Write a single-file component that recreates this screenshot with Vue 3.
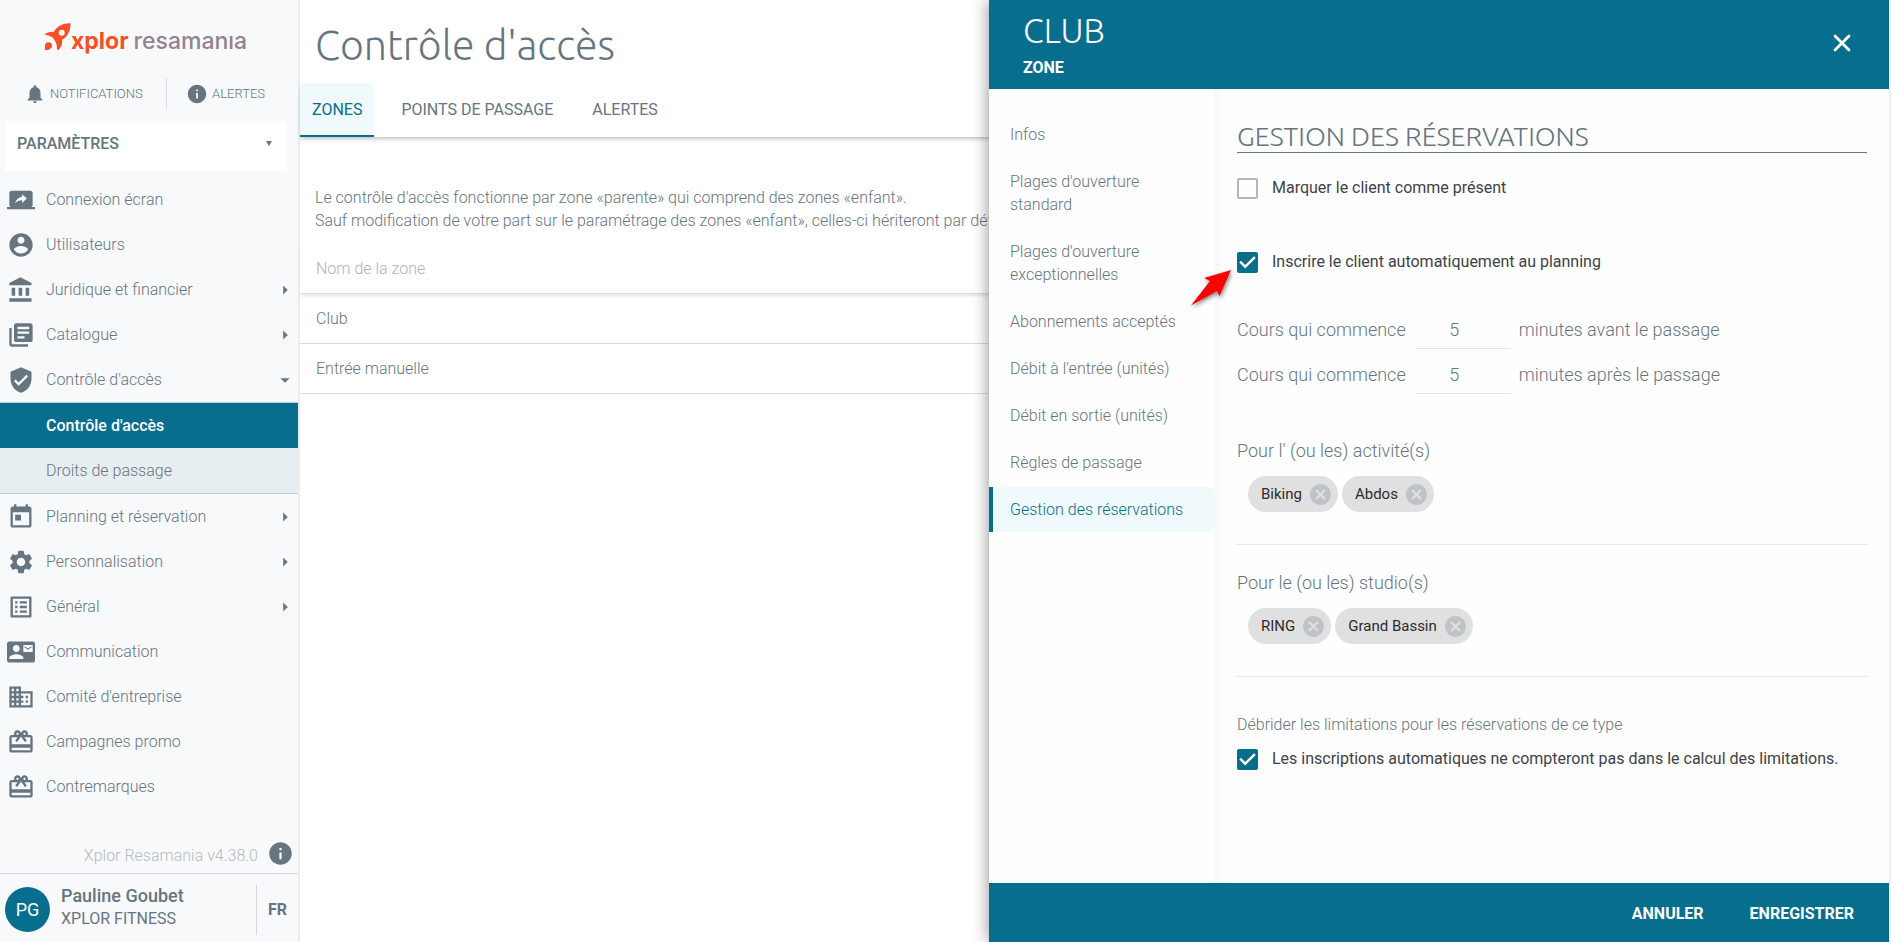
<template>
	<div class="page">
		<aside class="sidebar">
			<a href="#" class="logo">
				<svg class="rocket" viewBox="0 0 26 28">
					<path fill-rule="evenodd" d="M25.6.3C17.600.2 11.700 3.500 9 8.700 5.400 8.500 2.400 9.400.3 11c-.5.4-.3 1 .3 1.100 4 .2 7.200 1.900 9.200 5.400 1.600 2.600 2.200 5.300 2.200 8.500.1 1.200 1.100 1.300 1.800.5 2.500-2.700 3.700-6 3.300-9.700C22.700 13.600 25.500 8.200 25.600.3zM16.700 6.700a3 3 0 1 1 0 6 3 3 0 0 1 0-6z" />
					<path d="M0 27.200v-5c0-3.200 5-4.200 6.700-1.200 1.300 3.400-1.700 6.200-6.700 6.200z" />
				</svg>
				<span class="logo-xplor">xplor</span>
				<span class="logo-name">resamanıa</span>
			</a>

			<div class="notices">
				<button type="button" class="notice">
					<svg viewBox="0 0 24 24"><path :d="icons.bell" /></svg>NOTIFICATIONS
				</button>
				<button type="button" class="notice">
					<svg viewBox="0 0 24 24"><path :d="icons.info" /></svg>ALERTES
				</button>
			</div>

			<div class="section-select">
				<select v-model="section" aria-label="Section">
					<option>PARAMÈTRES</option>
				</select>
			</div>

			<nav class="menu">
				<template v-for="item in menu" :key="item.label">
					<a href="#" class="menu-item">
						<svg class="menu-icon" viewBox="0 0 24 24"><path :d="icons[item.icon]" /></svg>
						<span>{{ item.label }}</span>
						<svg v-if="item.arrow" class="menu-arrow" viewBox="0 0 24 24"><path :d="icons[item.arrow]" /></svg>
					</a>
					<div v-if="item.children" class="submenu">
						<a
							v-for="child in item.children"
							:key="child"
							href="#"
							class="submenu-item"
							:class="{ active: activeMenu === child }"
							@click.prevent="activeMenu = child"
						>{{ child }}</a>
					</div>
				</template>
			</nav>

			<div class="version">
				<span>Xplor Resamania v4.38.0</span>
				<svg viewBox="0 0 24 24"><path :d="icons.info" /></svg>
			</div>
			<div class="user">
				<div class="avatar">PG</div>
				<div class="user-text">
					<div class="user-name">Pauline Goubet</div>
					<div class="user-club">XPLOR FITNESS</div>
				</div>
				<button type="button" class="lang">FR</button>
			</div>
		</aside>

		<main class="main">
			<h1>Contrôle d'accès</h1>
			<div class="tabs">
				<button
					v-for="tab in tabs"
					:key="tab"
					type="button"
					class="tab"
					:class="{ active: activeTab === tab }"
					@click="activeTab = tab"
				>{{ tab }}</button>
			</div>
			<p class="intro">
				Le contrôle d'accès fonctionne par zone «parente» qui comprend des zones «enfant».<br />
				Sauf modification de votre part sur le paramétrage des zones «enfant», celles-ci hériteront par défaut du paramétrage de la zone «parente».
			</p>
			<table class="zones">
				<thead>
					<tr><th>Nom de la zone</th></tr>
				</thead>
				<tbody>
					<tr v-for="zone in zones" :key="zone"><td>{{ zone }}</td></tr>
				</tbody>
			</table>
		</main>

		<section class="drawer">
			<header class="drawer-header">
				<div>
					<h2>CLUB</h2>
					<div class="drawer-type">ZONE</div>
				</div>
				<button type="button" class="close" aria-label="Fermer">
					<svg viewBox="0 0 24 24"><path d="M6 6l12 12M18 6L6 18" /></svg>
				</button>
			</header>

			<div class="drawer-body">
				<nav class="steps">
					<a
						v-for="step in steps"
						:key="step"
						href="#"
						class="step"
						:class="{ active: activeStep === step }"
						@click.prevent="activeStep = step"
					>{{ step }}</a>
				</nav>

				<form class="form">
					<h3>GESTION DES RÉSERVATIONS</h3>
					<label class="check">
						<input v-model="present" type="checkbox" />
						<span>Marquer le client comme présent</span>
					</label>
					<label class="check auto">
						<input v-model="autoBook" type="checkbox" />
						<span>Inscrire le client automatiquement au planning</span>
						<svg class="pointer" viewBox="0 0 50 46">
							<path d="M45 4L18 12l6 3L5 39.500 31 25l2.500 5z" />
						</svg>
					</label>

					<div class="delay first">
						<label for="before">Cours qui commence</label>
						<input id="before" v-model="before" type="text" inputmode="numeric" />
						<span>minutes avant le passage</span>
					</div>
					<div class="delay">
						<label for="after">Cours qui commence</label>
						<input id="after" v-model="after" type="text" inputmode="numeric" />
						<span>minutes après le passage</span>
					</div>

					<div v-for="group in groups" :key="group.label" class="group">
						<div class="group-label">{{ group.label }}</div>
						<div class="chips">
							<span v-for="chip in group.chips" :key="chip" class="chip">
								{{ chip }}
								<button type="button" :aria-label="'Retirer ' + chip">
									<svg viewBox="0 0 24 24"><path :d="icons.cancel" /></svg>
								</button>
							</span>
						</div>
					</div>

					<div class="hint">Débrider les limitations pour les réservations de ce type</div>
					<label class="check last">
						<input v-model="noLimit" type="checkbox" />
						<span>Les inscriptions automatiques ne compteront pas dans le calcul des limitations.</span>
					</label>
				</form>
			</div>

			<footer class="drawer-footer">
				<button type="button">ANNULER</button>
				<button type="button">ENREGISTRER</button>
			</footer>
		</section>
	</div>
</template>

<script setup>
	import { ref } from "vue";

	const section = ref("PARAMÈTRES");
	const activeMenu = ref("Contrôle d'accès");
	const activeTab = ref("ZONES");
	const activeStep = ref("Gestion des réservations");
	const present = ref(false);
	const autoBook = ref(true);
	const noLimit = ref(true);
	const before = ref("5");
	const after = ref("5");

	const tabs = ["ZONES", "POINTS DE PASSAGE", "ALERTES"];
	const zones = ["Club", "Entrée manuelle"];

	const menu = [
		{ label: "Connexion écran", icon: "screen" },
		{ label: "Utilisateurs", icon: "account" },
		{ label: "Juridique et financier", icon: "bank", arrow: "right" },
		{ label: "Catalogue", icon: "books", arrow: "right" },
		{ label: "Contrôle d'accès", icon: "shield", arrow: "down", children: ["Contrôle d'accès", "Droits de passage"] },
		{ label: "Planning et réservation", icon: "today", arrow: "right" },
		{ label: "Personnalisation", icon: "settings", arrow: "right" },
		{ label: "Général", icon: "list", arrow: "right" },
		{ label: "Communication", icon: "contact" },
		{ label: "Comité d'entreprise", icon: "business" },
		{ label: "Campagnes promo", icon: "redeem" },
		{ label: "Contremarques", icon: "redeem" }
	];

	const steps = [
		"Infos",
		"Plages d'ouverture standard",
		"Plages d'ouverture exceptionnelles",
		"Abonnements acceptés",
		"Débit à l'entrée (unités)",
		"Débit en sortie (unités)",
		"Règles de passage",
		"Gestion des réservations"
	];

	const groups = [
		{ label: "Pour l' (ou les) activité(s)", chips: ["Biking", "Abdos"] },
		{ label: "Pour le (ou les) studio(s)", chips: ["RING", "Grand Bassin"] }
	];

	const icons = {
		screen: "M20 18c1.1 0 1.99-.9 1.99-2L22 6c0-1.11-.9-2-2-2H4c-1.11 0-2 .89-2 2v10c0 1.1.89 2 2 2H0v2h24v-2h-4zm-7-3.53v-2.19c-2.78 0-4.61.85-6 2.72.56-2.67 2.11-5.33 6-5.87V7l4 3.73-4 3.74z",
		account: "M12 2C6.48 2 2 6.48 2 12s4.48 10 10 10 10-4.48 10-10S17.52 2 12 2zm0 3c1.66 0 3 1.34 3 3s-1.34 3-3 3-3-1.34-3-3 1.34-3 3-3zm0 14.2c-2.5 0-4.71-1.28-6-3.22.03-1.99 4-3.08 6-3.08 1.99 0 5.97 1.09 6 3.08-1.29 1.94-3.5 3.22-6 3.22z",
		bank: "M4 10v7h3v-7H4zm6 0v7h3v-7h-3zM2 22h19v-3H2v3zm14-12v7h3v-7h-3zm-4.5-9L2 6v2h19V6l-9.5-5z",
		books: "M4 6H2v14c0 1.1.9 2 2 2h14v-2H4V6zm16-4H8c-1.1 0-2 .9-2 2v12c0 1.1.9 2 2 2h12c1.1 0 2-.9 2-2V4c0-1.1-.9-2-2-2zm-1 9H9V9h10v2zm-4 4H9v-2h6v2zm4-8H9V5h10v2z",
		shield: "M12 1L3 5v6c0 5.55 3.84 10.74 9 12 5.16-1.26 9-6.45 9-12V5l-9-4zm-2 16l-4-4 1.41-1.41L10 14.17l6.59-6.59L18 9l-8 8z",
		today: "M19 3h-1V1h-2v2H8V1H6v2H5c-1.11 0-1.99.9-1.99 2L3 19c0 1.1.89 2 2 2h14c1.1 0 2-.9 2-2V5c0-1.1-.9-2-2-2zm0 16H5V8h14v11zM7 10h5v5H7z",
		settings: "M19.14,12.94c0.04-0.3,0.06-0.61,0.06-0.94c0-0.32-0.02-0.64-0.07-0.94l2.03-1.58c0.18-0.14,0.23-0.41,0.12-0.61l-1.92-3.32c-0.12-0.22-0.37-0.29-0.59-0.22l-2.39,0.96c-0.5-0.38-1.03-0.7-1.62-0.94L14.4,2.81c-0.04-0.24-0.24-0.41-0.48-0.41h-3.84c-0.24,0-0.43,0.17-0.47,0.41L9.25,5.35C8.66,5.59,8.12,5.92,7.63,6.29L5.24,5.33c-0.22-0.08-0.47,0-0.59,0.22L2.74,8.87C2.62,9.08,2.66,9.34,2.86,9.48l2.03,1.58C4.84,11.36,4.8,11.69,4.8,12s0.02,0.64,0.07,0.94l-2.03,1.58c-0.18,0.14-0.23,0.41-0.12,0.61l1.92,3.32c0.12,0.22,0.37,0.29,0.59,0.22l2.39-0.96c0.5,0.38,1.03,0.7,1.62,0.94l0.36,2.54c0.05,0.24,0.24,0.41,0.48,0.41h3.84c0.24,0,0.44-0.17,0.47-0.41l0.36-2.54c0.59-0.24,1.13-0.56,1.62-0.94l2.39,0.96c0.22,0.08,0.47,0,0.59-0.22l1.92-3.32c0.12-0.22,0.07-0.47-0.12-0.61L19.14,12.94zM12,15.6c-1.98,0-3.6-1.62-3.6-3.6s1.62-3.6,3.6-3.6s3.6,1.62,3.6,3.6S13.98,15.6,12,15.6z",
		list: "M19 5v14H5V5h14m1.1-2H3.9c-.5 0-.9.4-.9.9v16.2c0 .4.4.9.9.9h16.2c.4 0 .9-.5.9-.9V3.9c0-.5-.5-.9-.9-.9zM11 7h6v2h-6V7zm0 4h6v2h-6v-2zm0 4h6v2h-6zM7 7h2v2H7zm0 4h2v2H7zm0 4h2v2H7z",
		contact: "M21 8V7l-3 2-3-2v1l3 2 3-2zm1-5H2C.9 3 0 3.9 0 5v14c0 1.1.9 2 2 2h20c1.1 0 1.99-.9 1.99-2L24 5c0-1.1-.9-2-2-2zM8 6c1.66 0 3 1.34 3 3s-1.34 3-3 3-3-1.34-3-3 1.34-3 3-3zm6 12H2v-1c0-2 4-3.1 6-3.1s6 1.1 6 3.1v1zm8-6h-8V6h8v6z",
		business: "M12 7V3H2v18h20V7H12zM6 19H4v-2h2v2zm0-4H4v-2h2v2zm0-4H4V9h2v2zm0-4H4V5h2v2zm4 12H8v-2h2v2zm0-4H8v-2h2v2zm0-4H8V9h2v2zm0-4H8V5h2v2zm10 12h-8v-2h2v-2h-2v-2h2v-2h-2V9h8v10zm-2-8h-2v2h2v-2zm0 4h-2v2h2v-2z",
		redeem: "M20 6h-2.18c.11-.31.18-.65.18-1 0-1.66-1.34-3-3-3-1.05 0-1.96.54-2.5 1.35l-.5.67-.5-.68C10.96 2.54 10.05 2 9 2 7.34 2 6 3.34 6 5c0 .35.07.69.18 1H4c-1.11 0-1.99.89-1.99 2L2 19c0 1.11.89 2 2 2h16c1.11 0 2-.89 2-2V8c0-1.11-.89-2-2-2zm-5-2c.55 0 1 .45 1 1s-.45 1-1 1-1-.45-1-1 .45-1 1-1zM9 4c.55 0 1 .45 1 1s-.45 1-1 1-1-.45-1-1 .45-1 1-1zm11 15H4v-2h16v2zm0-5H4V8h5.08L7 10.83 8.62 12 11 8.76l1-1.36 1 1.36L15.38 12 17 10.83 14.92 8H20v6z",
		bell: "M12 22c1.1 0 2-.9 2-2h-4c0 1.1.89 2 2 2zm6-6v-5c0-3.07-1.64-5.64-4.5-6.32V4c0-.83-.67-1.5-1.5-1.5s-1.5.67-1.5 1.5v.68C7.63 5.36 6 7.92 6 11v5l-2 2v1h16v-1l-2-2z",
		info: "M12 2C6.48 2 2 6.48 2 12s4.48 10 10 10 10-4.48 10-10S17.52 2 12 2zm1 15h-2v-6h2v6zm0-8h-2V7h2v2z",
		cancel: "M12 2C6.47 2 2 6.47 2 12s4.47 10 10 10 10-4.47 10-10S17.53 2 12 2zm5 13.59L15.59 17 12 13.41 8.41 17 7 15.59 10.59 12 7 8.41 8.41 7 12 10.59 15.59 7 17 8.41 13.41 12 17 15.59z",
		right: "M10 17l5-5-5-5v10z",
		down: "M7 10l5 5 5-5z"
	};
</script>

<style>
	body {
		margin: 0;
		background: #fff;
	}
</style>

<style scoped>
	.page {
		display: flex;
		position: relative;
		height: 100vh;
		overflow: hidden;
		font-family: Roboto, "Liberation Sans", sans-serif;
		font-size: 16px;
		font-weight: 300;
		line-height: 23px;
		color: #667580;
	}

	.page * {
		box-sizing: border-box;
	}

	button,
	select,
	input {
		margin: 0;
		padding: 0;
		border: 0;
		background: none;
		font: inherit;
		color: inherit;
	}

	button {
		cursor: pointer;
	}

	a {
		color: inherit;
		text-decoration: none;
	}

	svg {
		display: block;
		flex-shrink: 0;
		fill: currentColor;
	}

	/* sidebar */
	.sidebar {
		display: flex;
		flex-direction: column;
		flex-shrink: 0;
		width: 300px;
		background: #f8f9fb;
		border-right: 2px solid #ececee;
	}

	.logo {
		display: flex;
		height: 78px;
		padding: 23px 0 0 45px;
		font-family: Inter, sans-serif;
		font-size: 23px;
		line-height: 36px;
		color: #fa4f26;
	}

	.rocket {
		width: 26px;
		height: 28px;
	}

	.logo-xplor {
		font-weight: 700;
	}

	.logo-name {
		margin-left: 5px;
		font-weight: 500;
		color: #948290;
	}

	.notices {
		display: flex;
		height: 31px;
	}

	.notice {
		display: flex;
		align-items: center;
		gap: 4px;
		width: 167px;
		padding-left: 24px;
		font-size: 13px;
	}

	.notice:first-child {
		border-right: 1px solid #dcdfe2;
	}

	.notice:last-child {
		width: auto;
		padding-left: 19px;
	}

	.notice svg {
		width: 22px;
		height: 22px;
	}

	.section-select {
		display: flex;
		position: relative;
		margin: 12px 11px 6px 5px;
		background: #fff;
	}

	.section-select select {
		flex: 1;
		height: 50px;
		padding: 0 12px 6px;
		appearance: none;
		font-weight: 500;
	}

	.section-select::after {
		content: "";
		position: absolute;
		top: 20px;
		right: 15px;
		border: 3px solid transparent;
		border-top: 5px solid #667580;
		border-bottom: 0;
		pointer-events: none;
	}

	.menu {
		flex: 1;
	}

	.menu-item {
		display: flex;
		align-items: center;
		gap: 11px;
		height: 45px;
		padding: 0 2px 0 7px;
	}

	.menu-icon {
		width: 28px;
		height: 28px;
	}

	.menu-arrow {
		width: 22px;
		height: 22px;
		margin-left: auto;
	}

	.submenu {
		border-top: 1px solid #c6cdd2;
		border-bottom: 1px solid #c6cdd2;
		background: #e7eef1;
	}

	.submenu-item {
		display: block;
		padding-left: 46px;
		line-height: 45px;
	}

	.submenu-item.active {
		background: #076e8e;
		color: #fff;
		font-weight: 500;
	}

	.version {
		display: flex;
		justify-content: flex-end;
		align-items: center;
		gap: 9px;
		padding: 0 4px 6px 0;
		color: #b4bbc1;
	}

	.version span {
		padding-top: 4px;
	}

	.version svg {
		width: 27px;
		height: 27px;
		color: #667580;
	}

	.user {
		display: flex;
		align-items: center;
		height: 69px;
		padding: 3px 0 0 5px;
		border-top: 1px solid #d3d8dc;
	}

	.avatar {
		width: 45px;
		border-radius: 50%;
		background: #076e8e;
		color: #fff;
		font-size: 18px;
		font-weight: 400;
		line-height: 45px;
		text-align: center;
	}

	.user-text {
		flex: 1;
		padding: 0 0 6px 11px;
	}

	.user-name {
		font-size: 18px;
		font-weight: 500;
	}

	.user-club {
		font-weight: 400;
	}

	.lang {
		width: 42px;
		height: 50px;
		border-left: 1px solid #d3d8dc;
		font-weight: 700;
	}

	/* zones list */
	.main {
		flex: 1;
		min-width: 0;
	}

	h1 {
		margin: 0;
		padding: 17px 15px 10px;
		font-family: Ubuntu, "Noto Sans", sans-serif;
		font-size: 41px;
		font-weight: 300;
		line-height: 56px;
	}

	.tabs {
		display: flex;
		gap: 15px;
		box-shadow: 0 3px 4px -1px rgba(0, 0, 0, 0.24);
	}

	.tab {
		height: 54px;
		padding: 0 12px;
		border-bottom: 2px solid transparent;
		font-weight: 400;
	}

	.tab.active {
		border-bottom-color: #076e8e;
		border-top-right-radius: 4px;
		background: #f0fafc;
		color: #076e8e;
	}

	.intro {
		margin: 49px 0 12px;
		padding-left: 15px;
		white-space: nowrap;
	}

	.zones {
		width: 100%;
		border-collapse: separate;
		border-spacing: 0;
	}

	.zones th,
	.zones td {
		height: 50px;
		padding: 0 16px;
		border-bottom: 1px solid #dcdcdc;
		text-align: left;
	}

	.zones th {
		color: #b0b0b0;
		font-weight: 300;
		box-shadow: 0 3px 3px -1px rgba(0, 0, 0, 0.1);
	}

	/* zone drawer */
	.drawer {
		display: flex;
		flex-direction: column;
		position: absolute;
		top: 0;
		right: 0;
		bottom: 0;
		width: 902px;
		max-width: 100%;
		border-right: 2px solid #f1f1f1;
		background: #fefefe;
		box-shadow: 0 0 16px rgba(0, 0, 0, 0.45);
	}

	.drawer-header {
		display: flex;
		justify-content: space-between;
		align-items: center;
		height: 89px;
		padding: 0 33px 3px 34px;
		background: #076e8e;
		color: #fff;
	}

	h2 {
		margin: 0 0 3px;
		font-family: Ubuntu, "Noto Sans", sans-serif;
		font-size: 34px;
		font-weight: 300;
		line-height: 46px;
	}

	.drawer-type {
		font-weight: 700;
	}

	.close svg {
		width: 28px;
		height: 28px;
		fill: none;
		stroke: currentColor;
		stroke-width: 2.4;
		stroke-linecap: round;
	}

	.drawer-body {
		display: flex;
		flex: 1;
		min-height: 0;
	}

	.steps {
		display: flex;
		flex-direction: column;
		gap: 2px;
		width: 225px;
		padding-top: 23px;
	}

	.step {
		padding: 11px 16px 11px 17px;
		border-left: 4px solid transparent;
	}

	.step.active {
		border-left-color: #076e8e;
		border-radius: 0 6px 6px 0;
		background: #f0fafc;
		color: #076e8e;
	}

	.form {
		flex: 1;
		padding: 31px 22px 0 23px;
		background: linear-gradient(to right, #f8f8f8, #fefefe 12px);
	}

	h3 {
		margin: 0 0 25px;
		border-bottom: 1px solid #667580;
		font-family: Ubuntu, "Noto Sans", sans-serif;
		font-size: 27px;
		font-weight: 300;
		line-height: 32px;
	}

	.check {
		display: flex;
		position: relative;
		gap: 14px;
		color: #3d4248;
		font-weight: 400;
		line-height: 19px;
	}

	.check.auto {
		margin-top: 53px;
	}

	.check input {
		width: 21px;
		height: 21px;
		appearance: none;
		border: 2px solid #b0b9bf;
		border-radius: 2px;
	}

	.check input:checked {
		border: 0;
		background: #076e8e;
	}

	.check input:checked::before {
		content: "";
		display: block;
		height: 21px;
		background: #fff;
		clip-path: polygon(39% 78%, 11% 50%, 19% 42%, 39% 62%, 81% 20%, 89% 28%);
	}

	.pointer {
		position: absolute;
		left: -51px;
		top: 14px;
		width: 50px;
		height: 46px;
		fill: #f00;
		filter: drop-shadow(1px 2px 2px rgba(0, 0, 0, 0.5));
	}

	.delay {
		display: flex;
		align-items: center;
		gap: 9px;
		height: 45px;
		font-size: 18px;
	}

	.delay.first {
		margin-top: 34px;
	}

	.delay input {
		width: 95px;
		height: 39px;
		padding-right: 16px;
		border-bottom: 1px solid #e2e4e6;
		text-align: center;
		font-size: 18px;
	}

	.group {
		height: 132px;
		padding-top: 26px;
		border-bottom: 1px solid #e4e6e8;
	}

	.delay + .group {
		margin-top: 16px;
	}

	.group-label {
		font-size: 18px;
	}

	.chips {
		display: flex;
		gap: 4px;
		padding: 14px 11px 0;
	}

	.chip {
		display: flex;
		align-items: center;
		gap: 6px;
		height: 36px;
		padding: 0 5px 0 13px;
		border-radius: 18px;
		background: #e0e0e0;
		color: #2a2c2e;
		font-size: 15px;
		font-weight: 400;
	}

	.chip svg {
		width: 25px;
		height: 25px;
		color: #bec3c7;
	}

	.hint {
		margin: 36px 0 13px;
	}

	.drawer-footer {
		display: flex;
		justify-content: flex-end;
		gap: 46px;
		height: 59px;
		padding: 2px 35px 0 0;
		background: #076e8e;
		color: #fff;
	}

	.drawer-footer button {
		font-weight: 700;
	}
</style>
